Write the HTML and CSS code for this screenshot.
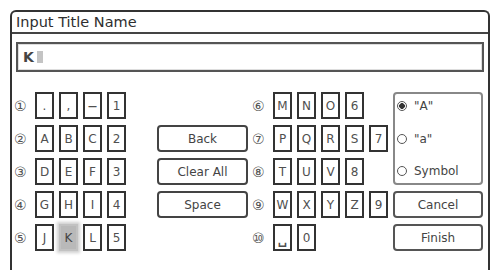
FILE: index.html
```html
<!DOCTYPE html>
<html>
<head>
<meta charset="utf-8">
<link rel="stylesheet" href="styles.css">
</head>
<body>
<div class="dialog">
  <div class="title">Input Title Name</div>
  <div class="input"><span class="typed">K</span><span class="cursor"></span></div>
  <div class="grid">
    <div class="keys g-l r1"><span class="num">①</span><span class="key">.</span><span class="key">,</span><span class="key big">—</span><span class="key">1</span></div>
    <div class="keys g-r r1"><span class="num">⑥</span><span class="key">M</span><span class="key">N</span><span class="key">O</span><span class="key">6</span></div>
    <div class="modes">
      <div class="mode"><span class="radio on"></span>"A"</div>
      <div class="mode"><span class="radio"></span>"a"</div>
      <div class="mode"><span class="radio"></span>Symbol</div>
    </div>

    <div class="keys g-l r2"><span class="num">②</span><span class="key">A</span><span class="key">B</span><span class="key">C</span><span class="key">2</span></div>
    <div class="btn g-m r2">Back</div>
    <div class="keys g-r r2"><span class="num">⑦</span><span class="key">P</span><span class="key">Q</span><span class="key">R</span><span class="key">S</span><span class="key">7</span></div>

    <div class="keys g-l r3"><span class="num">③</span><span class="key">D</span><span class="key">E</span><span class="key">F</span><span class="key">3</span></div>
    <div class="btn g-m r3">Clear All</div>
    <div class="keys g-r r3"><span class="num">⑧</span><span class="key">T</span><span class="key">U</span><span class="key">V</span><span class="key">8</span></div>

    <div class="keys g-l r4"><span class="num">④</span><span class="key">G</span><span class="key">H</span><span class="key">I</span><span class="key">4</span></div>
    <div class="btn g-m r4">Space</div>
    <div class="keys g-r r4"><span class="num">⑨</span><span class="key">W</span><span class="key">X</span><span class="key">Y</span><span class="key">Z</span><span class="key">9</span></div>
    <div class="btn2 g-x r4">Cancel</div>

    <div class="keys g-l r5"><span class="num">⑤</span><span class="key">J</span><span class="key sel">K</span><span class="key">L</span><span class="key">5</span></div>
    <div class="keys g-r r5"><span class="num">⑩</span><span class="key spc">␣</span><span class="key">0</span></div>
    <div class="btn2 g-x r5">Finish</div>
  </div>
</div>
</body>
</html>
```
FILE: styles.css
```css
html, body {
  margin: 0;
  padding: 0;
  background: #fff;
  overflow: hidden;
}
body {
  font-family: "DejaVu Sans", "Liberation Sans", sans-serif;
  color: #4a4a4a;
}
.dialog {
  margin: 10px 0 0 10px;
  width: 480px;
  height: 260px;
  box-sizing: border-box;
  border: 2px solid #333;
  border-bottom: none;
  border-radius: 6px 6px 0 0;
}
.title {
  height: 20px;
  line-height: 21px;
  padding-left: 4px;
  font-size: 14.5px;
  color: #2e2e2e;
  border-bottom: 2px solid #444;
}
.input {
  margin: 8px 4px 0 4px;
  height: 30px;
  box-sizing: border-box;
  border: 2px solid #555;
  box-shadow: inset 0 0 0 1px #ddd;
  display: flex;
  align-items: center;
  padding-left: 5px;
  font-size: 14px;
  font-weight: bold;
  color: #444;
}
.cursor {
  display: inline-block;
  width: 6px;
  height: 12px;
  margin-left: 3px;
  background: #c4c4c4;
}
.grid {
  margin: 20px 0 0 2px;
  display: grid;
  grid-template-columns: 143px 95px 141px 90px;
  grid-template-rows: repeat(5, 27px);
  row-gap: 6px;
}
.g-l { grid-column: 1; }
.g-m { grid-column: 2; }
.g-r { grid-column: 3; }
.g-x { grid-column: 4; }
.r1 { grid-row: 1; }
.r2 { grid-row: 2; }
.r3 { grid-row: 3; }
.r4 { grid-row: 4; }
.r5 { grid-row: 5; }
.keys {
  display: flex;
  align-items: center;
}
.num {
  width: 21px;
  font-size: 14px;
  color: #555;
}
.key {
  width: 19px;
  height: 27px;
  box-sizing: border-box;
  border: 2px solid #333;
  margin-right: 5px;
  display: flex;
  align-items: center;
  justify-content: center;
  font-size: 12px;
  color: #505050;
}
.key.big {
  font-size: 9px;
  font-weight: bold;
}
.key.spc {
  font-size: 13px;
  font-weight: bold;
  padding-top: 4px;
}
.key.sel {
  border-color: #c2c2c2;
  background: #b9b9b9;
  box-shadow: 0 0 3px 2px #cfcfcf;
  color: #444;
}
.btn, .btn2 {
  width: 91px;
  height: 27px;
  box-sizing: border-box;
  border: 2px solid #444;
  border-radius: 4px;
  display: flex;
  align-items: center;
  justify-content: center;
  font-size: 12px;
  color: #444;
}
.btn2 {
  border-color: #555;
  width: 90px;
}
.modes {
  grid-column: 4;
  grid-row: 1 / span 3;
  box-sizing: border-box;
  border: 2px solid #888;
  border-radius: 4px;
  display: flex;
  flex-direction: column;
  justify-content: space-between;
  padding: 4px 0 4px 2px;
}
.mode {
  display: flex;
  align-items: center;
  font-size: 12px;
  color: #444;
  height: 16px;
}
.radio {
  width: 8px;
  height: 8px;
  border: 1px solid #555;
  border-radius: 50%;
  margin-right: 7px;
  box-sizing: content-box;
}
.radio.on {
  background: radial-gradient(circle, #333 0 45%, #fff 55%);
}
```
